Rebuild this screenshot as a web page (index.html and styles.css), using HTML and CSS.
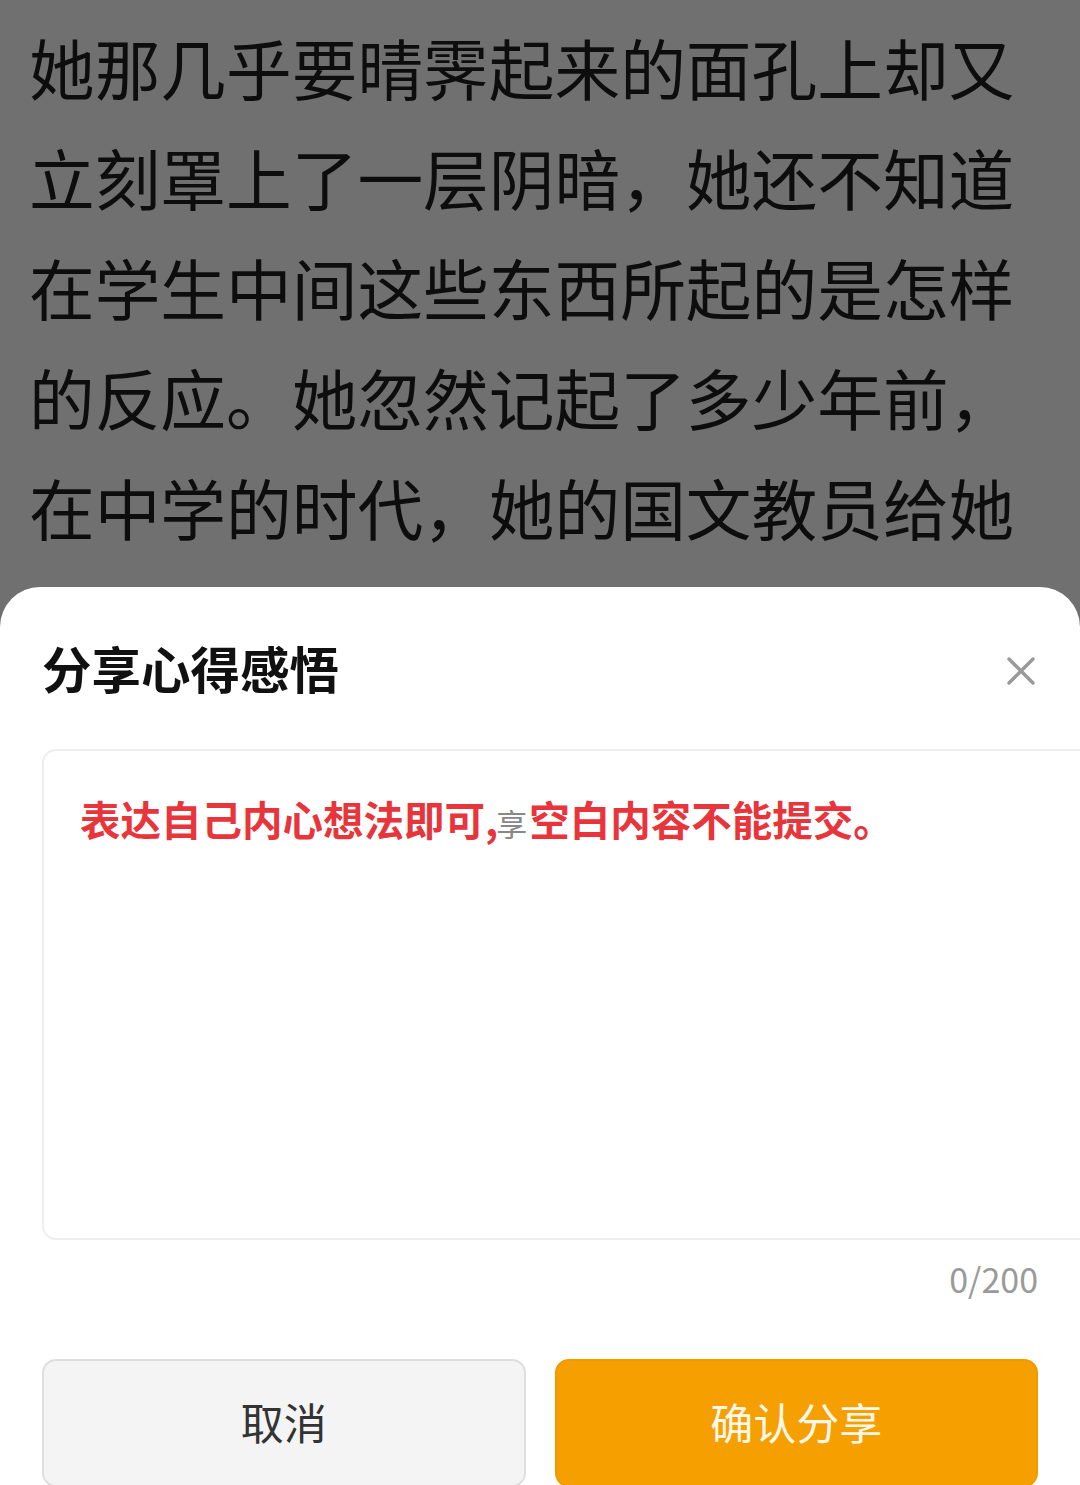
FILE: index.html
```html
<!DOCTYPE html>
<html lang="zh-CN">
<head>
    <meta charset="UTF-8">
    <meta name="viewport" content="width=device-width, initial-scale=1.0">
    <title>分享心得感悟</title>
    <link rel="stylesheet" href="styles.css">
</head>
<body>

<!-- Reading text behind the dimmed overlay -->
<div class="reader">
    <p class="reader-text">她那几乎要晴霁起来的面孔上却又<br>
        立刻罩上了一层阴暗，她还不知道<br>
        在学生中间这些东西所起的是怎样<br>
        的反应。她忽然记起了多少年前，<br>
        在中学的时代，她的国文教员给她</p>
</div>

<!-- Bottom sheet -->
<div class="sheet">
    <div class="sheet-header">
        <h2 class="sheet-title">分享心得感悟</h2>
        <svg class="close-icon" width="28" height="28" viewBox="0 0 28 28">
            <path d="M2 2 L26 26 M26 2 L2 26" stroke="#999" stroke-width="3.4" stroke-linecap="round" fill="none"/>
        </svg>
    </div>

    <div class="input-box">
        <p class="placeholder"><span class="warn">表达自己内心想法即可,</span><span class="faint">享</span><span class="warn">空白内容不能提交。</span></p>
    </div>

    <div class="counter">0/200</div>

    <div class="button-row">
        <button class="btn btn-cancel">取消</button>
        <button class="btn btn-confirm">确认分享</button>
    </div>
</div>

</body>
</html>
```

FILE: styles.css
```css
html, body {
    margin: 0;
    padding: 0;
}
body {
    width: 1080px;
    height: 1485px;
    overflow: hidden;
    position: relative;
    background: #707070;
    font-family: "Noto Sans CJK SC", "Noto Sans", sans-serif;
}
.reader {
    padding: 12px 0 0 29px;
}
.reader-text {
    margin: 0;
    font-size: 65.7px;
    line-height: 110px;
    color: #0d0d0d;
    white-space: nowrap;
}
.sheet {
    position: absolute;
    left: 0;
    right: 0;
    top: 587px;
    bottom: 0;
    background: #fff;
    border-radius: 40px 40px 0 0;
    overflow: hidden;
    padding: 0 42px;
}
.sheet-header {
    display: flex;
    align-items: center;
    justify-content: space-between;
    padding-top: 52px;
    height: 58px;
}
.sheet-title {
    margin: 0;
    font-size: 49.5px;
    line-height: 58px;
    font-weight: 700;
    color: #111;
}
.close-icon {
    margin-right: 3px;
    margin-top: 6px;
}
.input-box {
    margin-top: 52px;
    width: 1060px;
    height: 491px;
    border: 2px solid #eeeeee;
    border-radius: 14px;
    padding: 43px 36px 0;
    box-sizing: border-box;
}
.placeholder {
    margin: 0;
    font-size: 40.5px;
    line-height: 50px;
    font-weight: 700;
    white-space: nowrap;
}
.warn {
    color: #e8353b;
}
.faint {
    color: #888;
    font-weight: 400;
    font-size: 31px;
    margin-left: -2px;
    margin-right: 2px;
}
.counter {
    margin-top: 19px;
    text-align: right;
    font-size: 34px;
    line-height: 40px;
    color: #9a9a9a;
}
.button-row {
    display: flex;
    gap: 29px;
    margin-top: 60px;
}
.btn {
    flex: 1;
    height: 128px;
    border-radius: 14px;
    font-family: "Noto Sans CJK SC", "Noto Sans", sans-serif;
    font-size: 43px;
    padding: 0;
    padding-bottom: 4px;
}
.btn-cancel {
    background: #f4f4f4;
    border: 2px solid #dedede;
    color: #333;
}
.btn-confirm {
    background: #f5a000;
    border: 2px solid #f09a00;
    color: #fff8ea;
}
```
